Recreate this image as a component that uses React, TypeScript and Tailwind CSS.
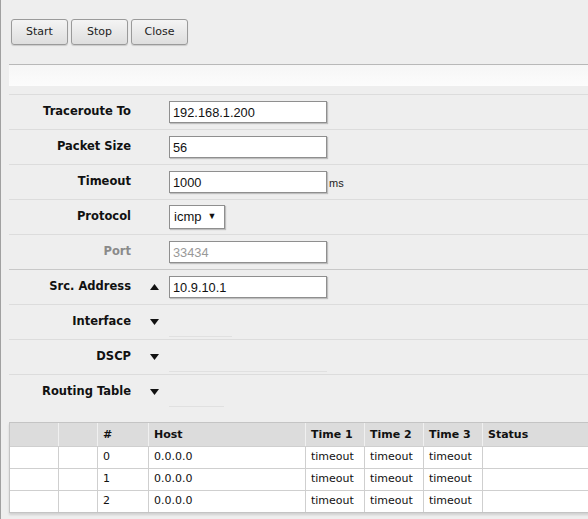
import React from "react";

const sans = "font-['DejaVu_Sans',Verdana,sans-serif]";
const arial = "font-['Liberation_Sans',Arial,sans-serif]";

function Tri({ up }: { up?: boolean }) {
  return (
    <svg width="9" height="6" viewBox="0 0 9 6" className="block">
      {up ? <path d="M4.5 0L9 6H0z" fill="#111" /> : <path d="M0 0h9L4.5 6z" fill="#111" />}
    </svg>
  );
}

function Btn({ children }: { children: React.ReactNode }) {
  return (
    <button
      className={`${sans} h-[26px] w-[57px] rounded-[3px] border border-[#9a9a9a] bg-gradient-to-b from-[#f4f4f4] to-[#dedede] pt-[1px] text-[11px] text-[#222] shadow-[0_1px_1px_rgba(0,0,0,0.15)]`}
    >
      {children}
    </button>
  );
}

function Input({ value, disabled, w = "w-[158px]" }: { value: string; disabled?: boolean; w?: string }) {
  return (
    <div
      className={`${arial} ${w} h-[22px] border border-[#8f8f8f] bg-white pl-[3px] pt-[1px] text-[12.8px] leading-[20px] shadow-[1px_1px_1px_rgba(0,0,0,0.2)] ${
        disabled ? "text-[#999]" : "text-[#111]"
      }`}
    >
      {value}
    </div>
  );
}

function Row({
  label,
  gray,
  arrow,
  dark,
  children,
}: {
  label: string;
  gray?: boolean;
  arrow?: "up" | "down";
  dark?: boolean;
  children?: React.ReactNode;
}) {
  return (
    <div className={`ml-[8px] flex h-[35px] items-center border-t ${dark ? "border-[#c8c8c8]" : "border-[#dcdcdc]"}`}>
      <div
        className={`${sans} w-[122px] text-right text-[11.5px] font-bold ${gray ? "text-[#8a8a8a]" : "text-[#111]"}`}
      >
        {label}
      </div>
      <div className="flex w-[38px] justify-end pr-[10px]">{arrow && <Tri up={arrow === "up"} />}</div>
      {children}
    </div>
  );
}

function Collapsed({ w }: { w: string }) {
  return (
    <div className="flex h-full flex-col justify-end pb-[2px]">
      <div className={`${w} h-px bg-[#e0e0e0]`} />
    </div>
  );
}

const cols = ["w-[49px]", "w-[39px]", "w-[51px]", "w-[157px]", "w-[59px]", "w-[59px]", "w-[59px]", "w-[140px]"];
const heads = ["", "", "#", "Host", "Time 1", "Time 2", "Time 3", "Status"];
const rows = [
  ["", "", "0", "0.0.0.0", "timeout", "timeout", "timeout", ""],
  ["", "", "1", "0.0.0.0", "timeout", "timeout", "timeout", ""],
  ["", "", "2", "0.0.0.0", "timeout", "timeout", "timeout", ""],
];

export default function App() {
  return (
    <div className="h-[519px] w-[588px] overflow-hidden border-l border-[#a0a0a0] bg-[#eeeeee]">
      <div className="flex gap-[3px] pl-[10px] pt-[19px]">
        <Btn>Start</Btn>
        <Btn>Stop</Btn>
        <Btn>Close</Btn>
      </div>

      <div className="ml-[8px] mt-[19px] h-[22px] border-t border-[#b8b8b8] bg-gradient-to-b from-[#f6f6f6] to-[#fcfcfc]" />

      <div className="mt-[8px]">
        <Row label="Traceroute To">
          <Input value="192.168.1.200" />
        </Row>
        <Row label="Packet Size">
          <Input value="56" />
        </Row>
        <Row label="Timeout">
          <Input value="1000" />
          <span className={`${arial} ml-[2px] mt-[3px] text-[11px] text-[#222]`}>ms</span>
        </Row>
        <Row label="Protocol">
          <div
            className={`${arial} flex h-[24px] w-[56px] items-center gap-[6px] border border-[#8f8f8f] bg-white pl-[4px] text-[13px] text-[#111] shadow-[1px_1px_1px_rgba(0,0,0,0.2)]`}
          >
            icmp <span className="text-[9px]">▼</span>
          </div>
        </Row>
        <Row label="Port" gray>
          <Input value="33434" disabled />
        </Row>
        <Row label="Src. Address" arrow="up" dark>
          <Input value="10.9.10.1" />
        </Row>
        <Row label="Interface" arrow="down">
          <Collapsed w="w-[63px]" />
        </Row>
        <Row label="DSCP" arrow="down">
          <Collapsed w="w-[158px]" />
        </Row>
        <Row label="Routing Table" arrow="down">
          <Collapsed w="w-[55px]" />
        </Row>
      </div>

      <div className={`${sans} ml-[8px] mt-[13px] w-[620px] border border-[#c4c4c4] text-[11px] text-[#111] shadow-[0_2px_2px_rgba(0,0,0,0.12)]`}>
        <div className="flex h-[23px] bg-[#dcdcdc]">
          {heads.map((h, i) => (
            <div
              key={i}
              className={`${cols[i]} flex items-center border-r border-[#f0f0f0] px-[5px] pt-[1px] font-bold`}
            >
              {h}
            </div>
          ))}
        </div>
        {rows.map((r, ri) => (
          <div key={ri} className="flex h-[22px] border-t border-[#cfcfcf] bg-white">
            {r.map((c, i) => (
              <div key={i} className={`${cols[i]} flex items-center border-r border-[#cfcfcf] px-[5px]`}>
                {c}
              </div>
            ))}
          </div>
        ))}
      </div>
    </div>
  );
}
